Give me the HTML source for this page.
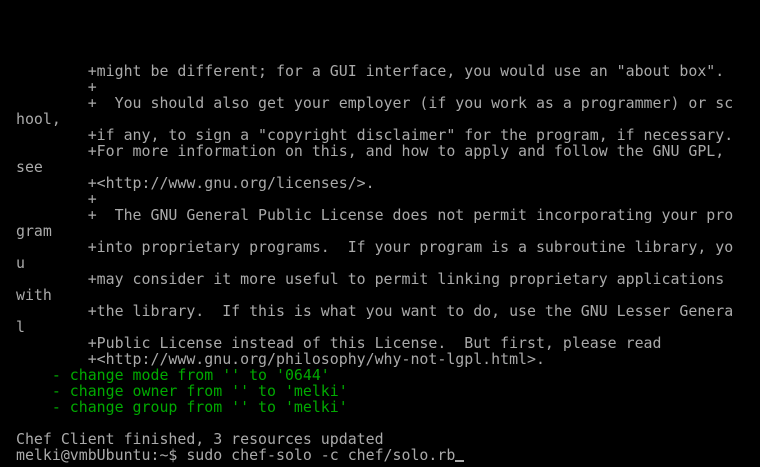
<!DOCTYPE html>
<html><head><style>
html,body{margin:0;padding:0;background:#000;width:760px;height:467px;overflow:hidden}
pre{position:absolute;left:16px;top:63px;margin:0;font-family:"DejaVu Sans Mono","Liberation Mono",monospace;font-size:14.9px;line-height:16px;color:#aaa;letter-spacing:0}
.g{color:#00aa00}
.c{display:inline-block;width:9px;height:2px;background:#aaa;vertical-align:-2px}
</style></head><body>
<pre>        +might be different; for a GUI interface, you would use an "about box".
        +
        +  You should also get your employer (if you work as a programmer) or sc
hool,
        +if any, to sign a "copyright disclaimer" for the program, if necessary.
        +For more information on this, and how to apply and follow the GNU GPL,
see
        +&lt;http://www.gnu.org/licenses/&gt;.
        +
        +  The GNU General Public License does not permit incorporating your pro
gram
        +into proprietary programs.  If your program is a subroutine library, yo
u
        +may consider it more useful to permit linking proprietary applications
with
        +the library.  If this is what you want to do, use the GNU Lesser Genera
l
        +Public License instead of this License.  But first, please read
        +&lt;http://www.gnu.org/philosophy/why-not-lgpl.html&gt;.
<span class="g">    - change mode from '' to '0644'
    - change owner from '' to 'melki'
    - change group from '' to 'melki'</span>

Chef Client finished, 3 resources updated
melki@vmbUbuntu:~$ sudo chef-solo -c chef/solo.rb<span class="c"></span></pre>
</body></html>
